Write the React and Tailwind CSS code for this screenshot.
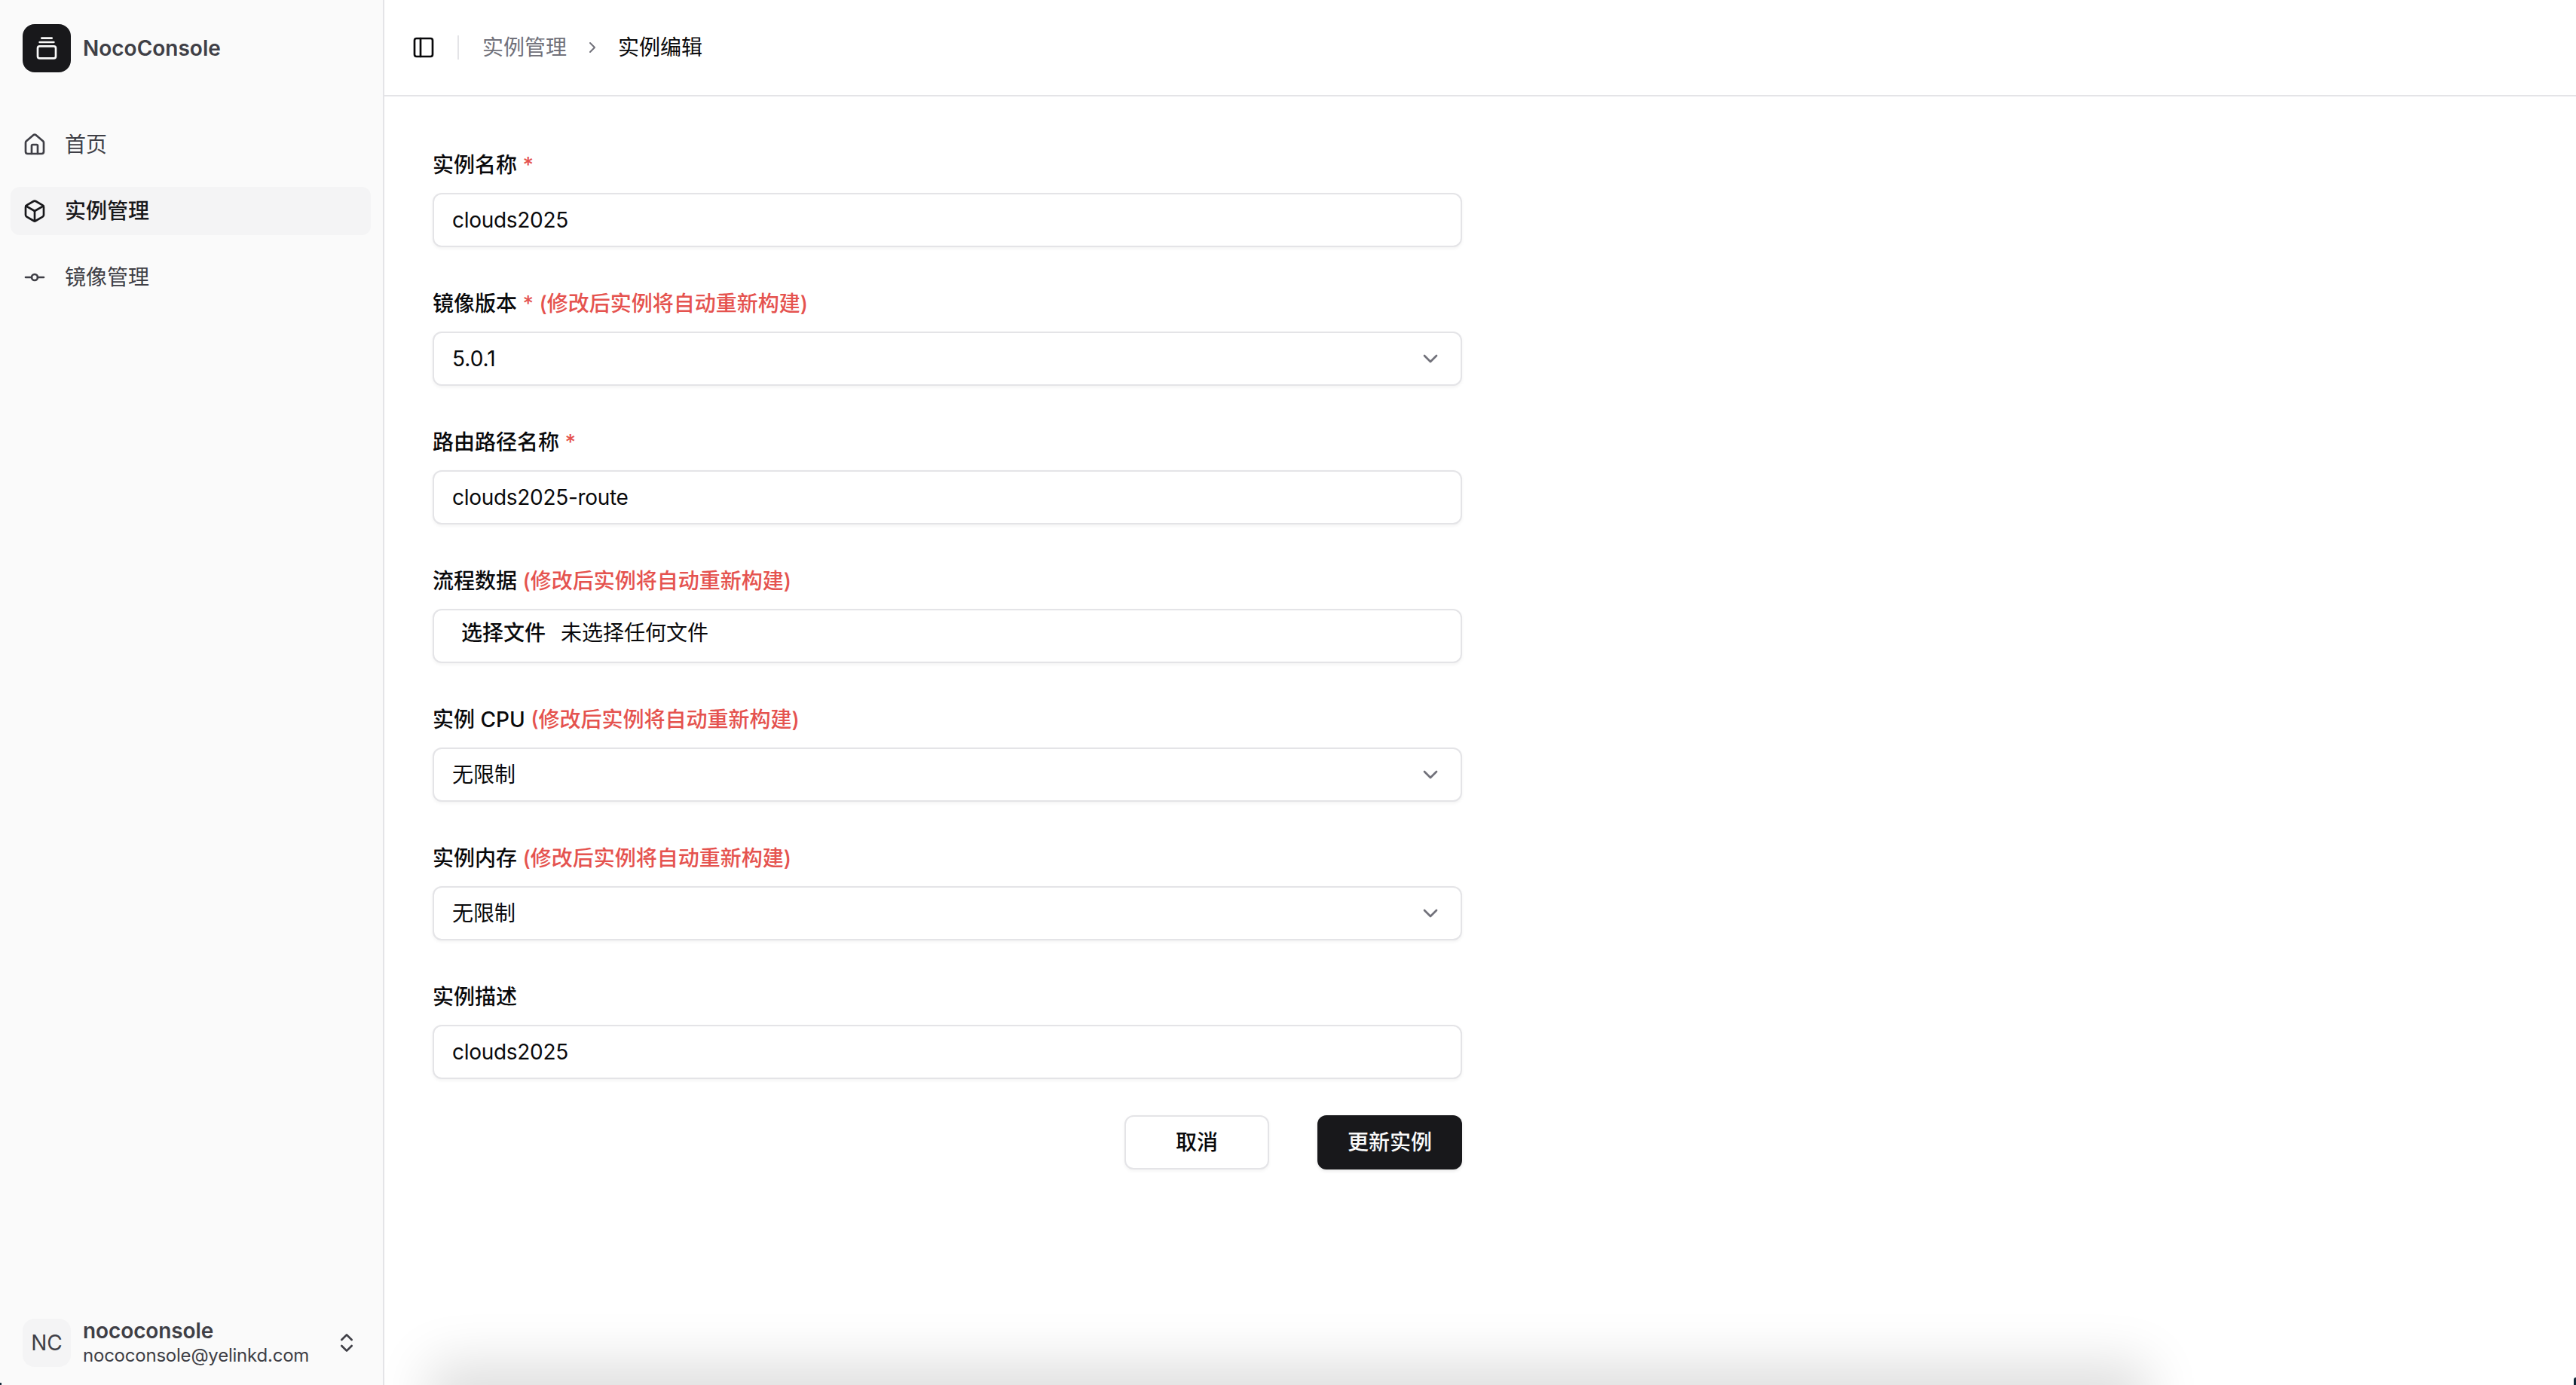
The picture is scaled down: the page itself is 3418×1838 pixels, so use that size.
import { House, Box, GitCommitHorizontal, GalleryVerticalEnd, ChevronsUpDown, ChevronDown, ChevronRight, PanelLeft } from 'lucide-react'

const FONT = "font-['Inter','Noto_Sans_CJK_SC',sans-serif]"
const REBUILD = '(修改后实例将自动重新构建)'

const NAV = [
  { label: '首页', Icon: House },
  { label: '实例管理', Icon: Box, active: true },
  { label: '镜像管理', Icon: GitCommitHorizontal },
]

function Field({ label, required, hint, children }) {
  return (
    <div className="flex flex-col gap-[23px]">
      <label className="h-[28px] text-[28px] leading-[28px] font-medium text-[#09090b]">
        {label}
        {required && <span className="text-[#e5534f]"> *</span>}
        {hint && <span className="text-[#e5534f]"> {hint}</span>}
      </label>
      {children}
    </div>
  )
}

function TextBox({ value }) {
  return (
    <div className="flex h-[72px] items-center rounded-[12px] border-2 border-[#e4e4e7] bg-white px-[24px] text-[28px] tracking-[-0.3px] text-[#09090b] shadow-[0_2px_4px_rgba(0,0,0,0.05)]">
      {value}
    </div>
  )
}

function SelectBox({ value }) {
  return (
    <div className="flex h-[72px] items-center justify-between rounded-[12px] border-2 border-[#e4e4e7] bg-white px-[24px] text-[28px] text-[#09090b] shadow-[0_2px_4px_rgba(0,0,0,0.05)]">
      <span>{value}</span>
      <ChevronDown size={32} strokeWidth={2} className="text-[#71717a]" />
    </div>
  )
}

export default function App() {
  return (
    <div className={`${FONT} relative flex h-[1838px] w-[3418px] overflow-hidden bg-white`}>
      {/* sidebar */}
      <aside className="flex w-[510px] shrink-0 flex-col justify-between border-r-2 border-[#e4e4e7] bg-[#fafafa]">
        <div>
          <div className="flex items-center gap-[16px] px-[30px] pt-[32px]">
            <div className="flex size-[64px] items-center justify-center rounded-[16px] bg-[#18181b] text-[#fafafa]">
              <GalleryVerticalEnd size={32} strokeWidth={2} />
            </div>
            <span className="text-[28px] font-semibold text-[#3f3f46]">NocoConsole</span>
          </div>
          <nav className="mt-[64px] flex flex-col gap-[24px] pr-[16px] pl-[14px]">
            {NAV.map(({ label, Icon, active }) => (
              <div
                key={label}
                className={`flex h-[64px] items-center gap-[24px] rounded-[12px] px-[16px] text-[28px] ${active ? 'bg-[#f4f4f5] font-medium text-[#18181b]' : 'text-[#3f3f46]'}`}
              >
                <Icon size={32} strokeWidth={2} />
                <span>{label}</span>
              </div>
            ))}
          </nav>
        </div>
        <div className="flex items-center px-[30px] pb-[24px]">
          <div className="flex size-[64px] items-center justify-center rounded-[16px] bg-[#f4f4f5] text-[28px] text-[#3f3f46]">NC</div>
          <div className="ml-[16px] flex flex-1 flex-col text-[#3f3f46]">
            <span className="text-[28px] leading-[34px] font-semibold tracking-[-0.1px]">nococonsole</span>
            <span className="mt-[1px] text-[24px] leading-[30px] tracking-[-0.22px]">nococonsole@yelinkd.com</span>
          </div>
          <ChevronsUpDown size={32} strokeWidth={2} className="mr-[2px] text-[#3f3f46]" />
        </div>
      </aside>

      {/* main */}
      <main className="flex min-w-0 flex-1 flex-col">
        <header className="flex h-[128px] items-center border-b-2 border-[#e4e4e7] pl-[36px] text-[28px]">
          <PanelLeft size={32} strokeWidth={2} className="text-[#09090b]" />
          <div className="mr-[31px] ml-[29px] h-[32px] w-[2px] bg-[#e4e4e7]" />
          <span className="text-[#71717a]">实例管理</span>
          <ChevronRight size={24} strokeWidth={2} className="mx-[22px] text-[#71717a]" />
          <span className="text-[#09090b]">实例编辑</span>
        </header>
        <form className="flex w-[1494px] flex-col gap-[61px] px-[64px] pt-[77px]">
          <Field label="实例名称" required><TextBox value="clouds2025" /></Field>
          <Field label="镜像版本" required hint={REBUILD}><SelectBox value="5.0.1" /></Field>
          <Field label="路由路径名称" required><TextBox value="clouds2025-route" /></Field>
          <Field label="流程数据" hint={REBUILD}>
            <div className="flex h-[72px] items-start rounded-[12px] border-2 border-[#e4e4e7] bg-white pt-[9px] pl-[36px] text-[28px] text-[#09090b] shadow-[0_2px_4px_rgba(0,0,0,0.05)]">
              <span className="font-medium">选择文件</span>
              <span className="ml-[20px]">未选择任何文件</span>
            </div>
          </Field>
          <Field label="实例 CPU" hint={REBUILD}><SelectBox value="无限制" /></Field>
          <Field label="实例内存" hint={REBUILD}><SelectBox value="无限制" /></Field>
          <Field label="实例描述"><TextBox value="clouds2025" /></Field>
          <div className="mt-[-13px] flex justify-end gap-[64px]">
            <button type="button" className="h-[72px] w-[192px] rounded-[12px] border-2 border-[#e4e4e7] bg-white text-[28px] font-medium text-[#09090b] shadow-[0_2px_4px_rgba(0,0,0,0.05)]">取消</button>
            <button type="button" className="h-[72px] w-[192px] rounded-[12px] bg-[#18181b] text-[28px] font-medium text-[#fafafa] shadow-[0_2px_4px_rgba(0,0,0,0.1)]">更新实例</button>
          </div>
        </form>
      </main>

      {/* shadow of something sitting just under the fold */}
      <div className="absolute top-[1838px] left-[600px] h-[40px] w-[2220px] shadow-[0_0_70px_30px_rgba(0,0,0,0.13)]" />
      {/* window corners peeking in */}
      <div className="absolute right-0 bottom-0 h-[10px] w-[3px] rounded-tl-[3px] bg-[#12293a]" />
      <div className="absolute bottom-0 left-0 h-[3px] w-[2px] bg-[#12293a]" />
    </div>
  )
}
